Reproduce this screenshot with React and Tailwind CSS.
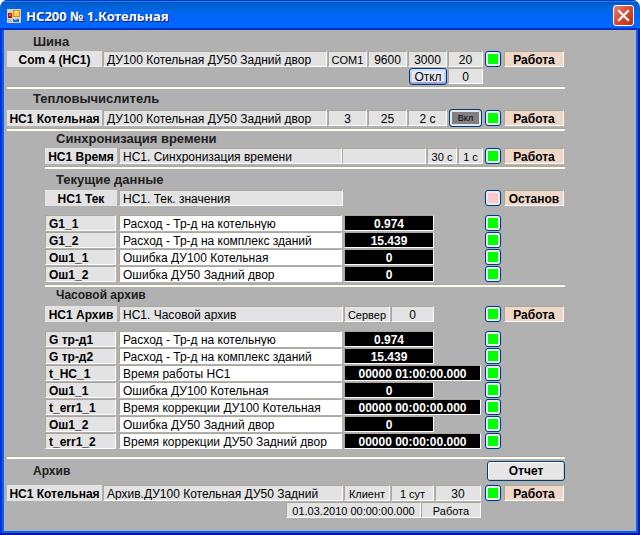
import React, { useState } from 'react'

const currentValues = [
    { name: 'G1_1', text: 'Расход - Тр-д на котельную', value: '0.974' },
    { name: 'G1_2', text: 'Расход - Тр-д на комплекс зданий', value: '15.439' },
    { name: 'Ош1_1', text: 'Ошибка ДУ100 Котельная', value: '0' },
    { name: 'Ош1_2', text: 'Ошибка ДУ50 Задний двор', value: '0' },
]

const hourValues = [
    { name: 'G тр-д1', text: 'Расход - Тр-д на котельную', value: '0.974' },
    { name: 'G тр-д2', text: 'Расход - Тр-д на комплекс зданий', value: '15.439' },
    { name: 't_НС_1', text: 'Время работы НС1', value: '00000 01:00:00.000', wide: true },
    { name: 'Ош1_1', text: 'Ошибка ДУ100 Котельная', value: '0' },
    { name: 't_err1_1', text: 'Время коррекции ДУ100 Котельная', value: '00000 00:00:00.000', wide: true },
    { name: 'Ош1_2', text: 'Ошибка ДУ50 Задний двор', value: '0' },
    { name: 't_err1_2', text: 'Время коррекции ДУ50 Задний двор', value: '00000 00:00:00.000', wide: true },
]

const sunken = 'h-4 border border-t-[#aca899] border-l-[#aca899] border-r-white border-b-white whitespace-nowrap overflow-hidden'

const Name = ({ className, children }) => (
    <div className={`h-4 shrink-0 overflow-hidden bg-[#e3e3e3] text-center leading-[18px] font-bold whitespace-nowrap ${className}`}>{children}</div>
)

const Desc = ({ children }) => (
    <div className={`${sunken} min-w-0 flex-1 bg-[#e3e3e3] pl-[3px] leading-4`}>{children}</div>
)

const Cell = ({ className, children }) => (
    <div className={`${sunken} shrink-0 bg-[#e3e3e3] text-center leading-4 ${className}`}>{children}</div>
)

const Led = ({ label, off }) => {
    const [on, setOn] = useState(!off)

    return (
        <button
            type="button"
            aria-label={label}
            aria-pressed={on}
            onClick={() => setOn(!on)}
            className="flex size-4 shrink-0 items-center justify-center rounded-[3px] border border-[#003c74] bg-[#e8ecf0] shadow-[0_0_0_1px_#a4b0b8]"
        >
            <span className={`size-[10px] ${on ? 'bg-[#00ff00]' : 'bg-[#ffc8c8]'}`}></span>
        </button>
    )
}

// Lamp and state text at the right end of a row
const State = ({ label, off, children }) => (
    <div className="mr-px ml-px flex shrink-0 gap-[3px]">
        <Led label={label} off={off} />
        <div className={`${sunken} w-[60px] bg-[#f0d8c8] text-center leading-4 font-bold`}>{children}</div>
    </div>
)

const Line = () => <hr className="h-[3px] border-0 border-t border-t-[#aca899] bg-[#fffff4]" />

const ValueTable = ({ rows }) => (
    <table className="mt-[9px] w-full table-fixed border-collapse">
        <tbody>
            {rows.map((row) => (
                <tr key={row.name} className="h-[17px] align-top">
                    <th scope="row" className="w-[74px] p-0 pr-[3px] text-left">
                        <div className={`${sunken} bg-[#e3e3e3] pl-[3px] leading-4`}>{row.name}</div>
                    </th>
                    <td className="p-0 pr-[2px]">
                        <input
                            type="text"
                            aria-label={row.name}
                            defaultValue={row.text}
                            className={`${sunken} block w-full bg-white pt-px pl-[3px] leading-[14px] outline-none`}
                        />
                    </td>
                    <td className="w-[141px] p-0">
                        <div className={`${sunken} bg-black text-center leading-4 font-bold text-white ${row.wide ? 'w-[137px]' : 'w-[90px]'}`}>
                            {row.value}
                        </div>
                    </td>
                    <td className="w-[80px] p-0">
                        <Led label={`${row.name} состояние`} />
                    </td>
                </tr>
            ))}
        </tbody>
    </table>
)

const App = () => {
    return (
        <div className="flex min-h-screen flex-col overflow-hidden rounded-t-lg border-b-2 border-b-[#001894] bg-[#b1b1b1] font-['Liberation_Sans',Arial,sans-serif] text-xs text-black">
            <header className="flex h-[30px] shrink-0 items-center justify-between border-b-2 border-[#0030c0] bg-linear-to-b from-[#0040c8] from-0% via-[#0062cc] via-15% to-[#0066ff] to-60% pt-[3px] pr-[6px] pl-[7px] shadow-[inset_0_1px_#0038b8,inset_0_2px_#2080f8]">
                <div className="flex items-center gap-[5px]">
                    <svg width="14" height="14" viewBox="0 0 14 14" aria-hidden="true">
                        <rect width="14" height="14" fill="#d8d4c4" />
                        <rect x="6" y="1" width="7" height="7" fill="#e08a10" />
                        <rect x="7" y="2" width="5" height="5" fill="#ffc840" />
                        <rect x="8" y="2" width="3" height="2" fill="#ffe890" />
                        <rect x="1" y="4" width="4" height="5" fill="#a81808" />
                        <rect x="2" y="5" width="2" height="2" fill="#f06040" />
                        <rect x="1" y="10" width="4" height="3" fill="#b8bcc4" />
                        <rect x="6" y="10" width="6" height="3" fill="#2068d8" />
                        <rect x="7" y="10" width="3" height="1" fill="#80b0f8" />
                    </svg>
                    <h1 className="font-['Noto_Sans',sans-serif] text-[13px] leading-5 font-bold text-white [text-shadow:1px_1px_#00186c]">НС200 № 1.Котельная</h1>
                </div>
                <button type="button" aria-label="Закрыть" className="flex size-[21px] items-center justify-center rounded-[3px] border border-white bg-linear-to-br from-[#e88070] via-[#d84830] to-[#b83010]">
                    <svg width="13" height="13" viewBox="0 0 13 13" aria-hidden="true">
                        <path d="M2 2L11 11M11 2L2 11" stroke="white" strokeWidth="2.2" strokeLinecap="square" />
                    </svg>
                </button>
            </header>

            <main className="flex-1 border-x-2 border-r-[#001ca0] border-l-[#0030d0]">
                <div className="min-h-[503px] border-x-2 border-b-2 border-[#0062f8] pr-[71px] pl-[3px]">
                    <section className="pt-1">
                        <h2 className="pl-[26px] text-[13px] leading-4 font-bold text-[#202020]">Шина</h2>
                        <div className="mt-px flex gap-px">
                            <Name className="w-[95px]">Com 4 (НС1)</Name>
                            <Desc>ДУ100 Котельная ДУ50 Задний двор</Desc>
                            <Cell className="w-[39px] text-[11px]">COM1</Cell>
                            <Cell className="w-[39px]">9600</Cell>
                            <Cell className="w-[39px]">3000</Cell>
                            <Cell className="w-[35px]">20</Cell>
                            <State label="Шина">Работа</State>
                        </div>
                        <div className="mt-px mr-[82px] mb-px flex items-start justify-end gap-px">
                            <button type="button" className="h-[17px] w-[38px] rounded-[3px] border border-[#003c74] bg-[#e8e8f0] pt-px leading-[14px] shadow-[inset_0_-2px_#98a0e0,inset_0_2px_#ccdcff,inset_2px_0_#bcccf8,inset_-2px_0_#bcccf8]">Откл</button>
                            <Cell className="w-[35px]">0</Cell>
                        </div>
                        <Line />
                    </section>

                    <section className="pt-[2px]">
                        <h2 className="pl-[26px] text-[13px] leading-4 font-bold text-[#202020]">Тепловычислитель</h2>
                        <div className="mt-[3px] mb-[2px] flex gap-px">
                            <Name className="w-[95px]">НС1 Котельная</Name>
                            <Desc>ДУ100 Котельная ДУ50 Задний двор</Desc>
                            <Cell className="w-[39px]">3</Cell>
                            <Cell className="w-[39px]">25</Cell>
                            <Cell className="w-[39px]">2 с</Cell>
                            <div className="h-4 w-[35px] shrink-0 pl-px">
                                <button type="button" className="-mt-px block h-[18px] w-[33px] rounded-[3px] border border-[#003c74] bg-[#808080] text-[9px] leading-4 shadow-[inset_0_0_0_2px_#e4e8ec]">Вкл</button>
                            </div>
                            <State label="Тепловычислитель">Работа</State>
                        </div>
                        <Line />
                    </section>

                    <section className="pl-[38px]">
                        <h2 className="pl-[11px] text-[13px] leading-4 font-bold text-[#202020]">Синхронизация времени</h2>
                        <div className="mt-px mb-[2px] flex">
                            <Name className="mr-[2px] w-[72px]">НС1 Время</Name>
                            <Desc>НС1. Синхронизация времени</Desc>
                            <Cell className="w-[84px]"></Cell>
                            <Cell className="ml-px w-[30px] text-[11px]">30 с</Cell>
                            <Cell className="mx-px w-[25px] text-[11px]">1 с</Cell>
                            <State label="Синхронизация времени">Работа</State>
                        </div>
                        <Line />
                    </section>

                    <section className="pt-[3px] pl-[38px]">
                        <h2 className="pl-[11px] text-[13px] leading-4 font-bold text-[#202020]">Текущие данные</h2>
                        <div className="mt-[2px] flex">
                            <Name className="mr-[2px] w-[72px]">НС1 Тек</Name>
                            <Desc>НС1. Тек. значения</Desc>
                            <div className="w-[141px] shrink-0"></div>
                            <State label="Текущие данные" off>Останов</State>
                        </div>
                        <ValueTable rows={currentValues} />
                        <div className="pt-px">
                            <Line />
                        </div>
                    </section>

                    <section className="pl-[38px]">
                        <h2 className="pl-[11px] leading-4 font-bold text-[#202020]">Часовой архив</h2>
                        <div className="mt-[3px] flex">
                            <Name className="mr-[2px] w-[72px]">НС1 Архив</Name>
                            <Desc>НС1. Часовой архив</Desc>
                            <Cell className="mx-px w-[46px] text-[11px]">Сервер</Cell>
                            <Cell className="mr-[50px] w-[43px]">0</Cell>
                            <State label="Часовой архив">Работа</State>
                        </div>
                        <ValueTable rows={hourValues} />
                    </section>

                    <section className="pt-[6px]">
                        <Line />
                        <div className="mt-[2px] flex items-center justify-between">
                            <h2 className="pl-[26px] leading-4 font-bold text-[#202020]">Архив</h2>
                            <button type="button" className="h-5 w-[78px] rounded-[3px] border border-[#003c74] bg-[#e6e6e6] leading-4 font-bold shadow-[inset_0_1px_white,inset_1px_0_white,inset_-1px_-1px_#c8ccd4]">Отчет</button>
                        </div>
                        <div className="mt-1 flex gap-px">
                            <Name className="w-[95px]">НС1 Котельная</Name>
                            <Desc>Архив.ДУ100 Котельная ДУ50 Задний</Desc>
                            <Cell className="w-[46px] text-[11px]">Клиент</Cell>
                            <Cell className="w-[43px] text-[11px]">1 сут</Cell>
                            <Cell className="mr-[2px] w-[46px]">30</Cell>
                            <State label="Архив">Работа</State>
                        </div>
                        <div className="mt-px mr-[84px] flex justify-end text-[11px]">
                            <Cell className="w-[135px]">01.03.2010 00:00:00.000</Cell>
                            <Cell className="w-[60px]">Работа</Cell>
                        </div>
                    </section>
                </div>
            </main>
        </div>
    )
}

export default App
